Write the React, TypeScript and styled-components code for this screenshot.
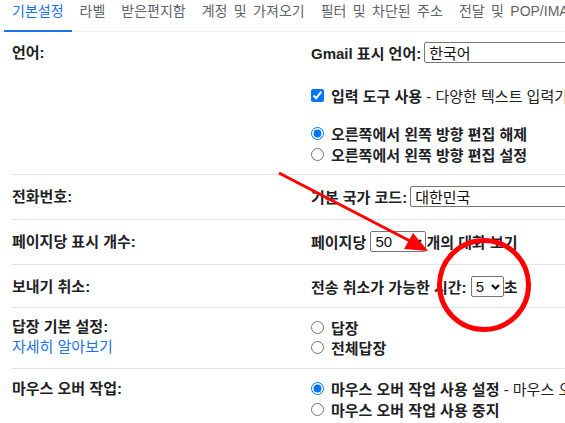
import React from "react";
import styled, { createGlobalStyle } from "styled-components";

const Global = createGlobalStyle`
  html, body { margin: 0; padding: 0; background: #fff; }
  body {
    font-family: Arial, "Liberation Sans", "Noto Sans CJK KR", sans-serif;
    color: #202124;
    overflow: hidden;
  }
`;

const Page = styled.div`
  position: relative;
  width: 565px;
  height: 423px;
  overflow: hidden;
  background: #fff;
`;

const TabBar = styled.div`
  display: flex;
  height: 31px;
  border-bottom: 1px solid #eceff1;
  padding-left: 4px;
  white-space: nowrap;
`;

const Tab = styled.div<{ $active?: boolean }>`
  box-sizing: border-box;
  height: 32px;
  margin-bottom: -1px;
  padding: 0 8px;
  font-size: 14px;
  line-height: 23px;
  word-spacing: 2.5px;
  color: ${(p) => (p.$active ? "#1a73e8" : "#5f6368")};
  border-bottom: 2px solid ${(p) => (p.$active ? "#1a73e8" : "transparent")};
  flex-shrink: 0;
`;

const Row = styled.div<{ $first?: boolean; $pt?: number; $pb?: number }>`
  display: grid;
  grid-template-columns: 300px 1fr;
  margin-left: 11px;
  border-top: ${(p) => (p.$first ? "none" : "1px solid #e3e3e3")};
  padding: ${(p) => p.$pt ?? 11}px 0 ${(p) => p.$pb ?? 12}px;
  font-size: 15px;
  white-space: nowrap;
`;

const LabelCell = styled.div`
  display: flex;
  flex-direction: column;
  padding-left: 1px;
`;

const Label = styled.div<{ $h?: number }>`
  font-weight: 700;
  line-height: ${(p) => p.$h ?? 21}px;
`;

const HelpLink = styled.a`
  color: #1a73e8;
  line-height: 20px;
  text-decoration: none;
`;

const ValueCell = styled.div`
  display: flex;
  flex-direction: column;
  min-width: 0;
`;

const Line = styled.div<{ $h?: number; $mt?: number }>`
  display: flex;
  align-items: center;
  height: ${(p) => p.$h ?? 21}px;
  margin-top: ${(p) => p.$mt ?? 0}px;
  white-space: nowrap;
`;

const Strong = styled.span`
  font-weight: 700;
`;

const Desc = styled.span`
  font-weight: 400;
  color: #222;
`;

const Check = styled.input`
  width: 13px;
  height: 13px;
  margin: 0 7px 0 0;
  flex-shrink: 0;
`;

const Box = styled.div<{ $w: number; $ml?: number }>`
  box-sizing: border-box;
  display: flex;
  align-items: center;
  justify-content: space-between;
  flex-shrink: 0;
  width: ${(p) => p.$w}px;
  height: 21px;
  margin-left: ${(p) => p.$ml ?? 0}px;
  padding: 0 3px 0 4px;
  border: 1px solid #767676;
  border-radius: 2px;
  background: #fff;
  font-size: 15px;
  font-weight: 400;
  color: #111;
`;

const Chevron = () => (
  <svg width="9" height="6" viewBox="0 0 9 6" aria-hidden="true">
    <path d="M1 1 L4.5 4.5 L8 1" fill="none" stroke="#111" strokeWidth="2.2" />
  </svg>
);

const Annot = styled.svg`
  position: absolute;
  left: 0;
  top: 0;
  pointer-events: none;
`;

export default function App() {
  return (
    <>
      <Global />
      <Page>
        <TabBar>
          <Tab $active>기본설정</Tab>
          <Tab>라벨</Tab>
          <Tab>받은편지함</Tab>
          <Tab>계정 및 가져오기</Tab>
          <Tab>필터 및 차단된 주소</Tab>
          <Tab>전달 및 POP/IMAP</Tab>
        </TabBar>

        <Row $first $pt={10} $pb={9}>
          <LabelCell>
            <Label>언어:</Label>
          </LabelCell>
          <ValueCell>
            <Line>
              <Strong>Gmail 표시 언어:</Strong>
              <Box $w={200} $ml={3}>
                <span>한국어</span>
              </Box>
            </Line>
            <Line $h={20} $mt={22}>
              <Check type="checkbox" defaultChecked />
              <Strong>입력 도구 사용</Strong>
              <Desc>&nbsp;- 다양한 텍스트 입력기를 사용하여 원하는 언어로 입력합니다.</Desc>
            </Line>
            <Line $mt={18}>
              <Check type="radio" name="rtl" defaultChecked />
              <Strong>오른쪽에서 왼쪽 방향 편집 해제</Strong>
            </Line>
            <Line>
              <Check type="radio" name="rtl" />
              <Strong>오른쪽에서 왼쪽 방향 편집 설정</Strong>
            </Line>
          </ValueCell>
        </Row>

        <Row>
          <LabelCell>
            <Label>전화번호:</Label>
          </LabelCell>
          <ValueCell>
            <Line>
              <Strong>기본 국가 코드:</Strong>
              <Box $w={200} $ml={3}>
                <span>대한민국</span>
              </Box>
            </Line>
          </ValueCell>
        </Row>

        <Row>
          <LabelCell>
            <Label>페이지당 표시 개수:</Label>
          </LabelCell>
          <ValueCell>
            <Line>
              <Strong>페이지당&nbsp;</Strong>
              <Box $w={56}>
                <span>50</span>
                <Chevron />
              </Box>
              <Strong>개의 대화 보기</Strong>
            </Line>
          </ValueCell>
        </Row>

        <Row $pb={10}>
          <LabelCell>
            <Label>보내기 취소:</Label>
          </LabelCell>
          <ValueCell>
            <Line>
              <Strong>전송 취소가 가능한 시간:&nbsp;</Strong>
              <Box $w={33}>
                <span>5</span>
                <Chevron />
              </Box>
              <Strong>초</Strong>
            </Line>
          </ValueCell>
        </Row>

        <Row $pt={9} $pb={11}>
          <LabelCell>
            <Label $h={20}>답장 기본 설정:</Label>
            <HelpLink href="#">자세히 알아보기</HelpLink>
          </LabelCell>
          <ValueCell>
            <Line $h={20}>
              <Check type="radio" name="reply" />
              <Strong>답장</Strong>
            </Line>
            <Line $h={20}>
              <Check type="radio" name="reply" />
              <Strong>전체답장</Strong>
            </Line>
          </ValueCell>
        </Row>

        <Row $pt={9}>
          <LabelCell>
            <Label>마우스 오버 작업:</Label>
          </LabelCell>
          <ValueCell>
            <Line>
              <Check type="radio" name="hover" defaultChecked />
              <Strong>마우스 오버 작업 사용 설정</Strong>
              <Desc>&nbsp;- 마우스 오버로 보관처리, 삭제, 읽음으로 표시 기능을 빠르게 이용합니다.</Desc>
            </Line>
            <Line $h={20}>
              <Check type="radio" name="hover" />
              <Strong>마우스 오버 작업 사용 중지</Strong>
            </Line>
          </ValueCell>
        </Row>

        <Annot width="565" height="423" viewBox="0 0 565 423">
          <line x1="279" y1="173" x2="410" y2="241" stroke="#ff0000" strokeWidth="3" />
          <polygon points="428,251 404,249 413,233" fill="#ff0000" />
          <ellipse cx="484" cy="285" rx="44.5" ry="44.5" fill="none" stroke="#ff0000" strokeWidth="5" />
        </Annot>
      </Page>
    </>
  );
}
